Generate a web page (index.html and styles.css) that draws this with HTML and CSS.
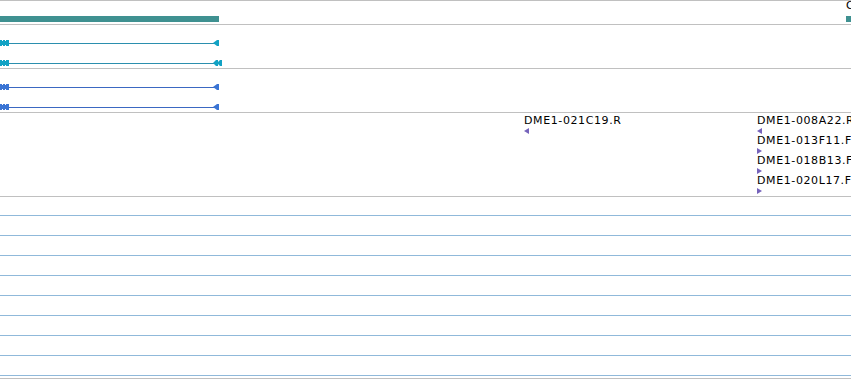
FILE: index.html
```html
<!DOCTYPE html>
<html>
<head>
<meta charset="utf-8">
<link rel="stylesheet" href="styles.css">
</head>
<body>
<div class="canvas">
  <div class="track t1">
    <div class="bar" style="left:0;width:219px"></div>
    <div class="label" style="left:846px;top:-2px">C</div>
    <div class="bar" style="left:846px;width:8px"></div>
  </div>
  <div class="track t2">
    <svg class="feat" style="top:15px" width="225" height="7" viewBox="0 0 225 7">
      <rect x="8" y="3" width="207" height="1" class="ln-c"/>
      <path class="fc" d="M0 0h9v6H0z"/>
      <path fill="#fff" d="M2 0h1v1H2zM5 0h1v1H5zM2 5h1v1H2zM5 5h1v1H5z"/>
      <polygon class="fc" points="213,3 217,0 219,0 219,6 217,6"/>
    </svg>
    <svg class="feat" style="top:35px" width="225" height="7" viewBox="0 0 225 7">
      <rect x="8" y="3" width="207" height="1" class="ln-c"/>
      <path class="fc" d="M0 0h9v6H0z"/>
      <path fill="#fff" d="M2 0h1v1H2zM5 0h1v1H5zM2 5h1v1H2zM5 5h1v1H5z"/>
      <polygon class="fc" points="213,3 216,0 218,0 218,6 216,6"/>
      <polygon class="fc" points="217,3 220,0 222,0 222,6 220,6"/>
    </svg>
  </div>
  <div class="track t3">
    <svg class="feat" style="top:15px" width="225" height="7" viewBox="0 0 225 7">
      <rect x="8" y="3" width="207" height="1" class="ln-b"/>
      <path class="fb" d="M0 0h9v6H0z"/>
      <path fill="#fff" d="M2 0h1v1H2zM5 0h1v1H5zM2 5h1v1H2zM5 5h1v1H5z"/>
      <polygon class="fb" points="213,3 217,0 219,0 219,6 217,6"/>
    </svg>
    <svg class="feat" style="top:35px" width="225" height="7" viewBox="0 0 225 7">
      <rect x="8" y="3" width="207" height="1" class="ln-b"/>
      <path class="fb" d="M0 0h9v6H0z"/>
      <path fill="#fff" d="M2 0h1v1H2zM5 0h1v1H5zM2 5h1v1H2zM5 5h1v1H5z"/>
      <polygon class="fb" points="213,3 217,0 219,0 219,6 217,6"/>
    </svg>
  </div>
  <div class="track t4">
    <div class="clone" style="left:524px;top:1px">
      <span class="label-f">DME1-021C19.R</span>
      <svg class="arr" width="5" height="6" viewBox="0 0 5 6"><polygon points="0,3 5,0 5,6"/></svg>
    </div>
    <div class="clone" style="left:757px;top:1px">
      <span class="label-f">DME1-008A22.R</span>
      <svg class="arr" width="5" height="6" viewBox="0 0 5 6"><polygon points="0,3 5,0 5,6"/></svg>
    </div>
    <div class="clone" style="left:757px;top:21px">
      <span class="label-f">DME1-013F11.F</span>
      <svg class="arr" width="5" height="6" viewBox="0 0 5 6"><polygon points="5,3 0,0 0,6"/></svg>
    </div>
    <div class="clone" style="left:757px;top:41px">
      <span class="label-f">DME1-018B13.F</span>
      <svg class="arr" width="5" height="6" viewBox="0 0 5 6"><polygon points="5,3 0,0 0,6"/></svg>
    </div>
    <div class="clone" style="left:757px;top:61px">
      <span class="label-f">DME1-020L17.F</span>
      <svg class="arr" width="5" height="6" viewBox="0 0 5 6"><polygon points="5,3 0,0 0,6"/></svg>
    </div>
  </div>
  <div class="track t5">
    <div class="grid-row"></div>
    <div class="grid-row"></div>
    <div class="grid-row"></div>
    <div class="grid-row"></div>
    <div class="grid-row"></div>
    <div class="grid-row"></div>
    <div class="grid-row"></div>
    <div class="grid-row"></div>
    <div class="grid-row"></div>
  </div>
</div>
</body>
</html>
```

FILE: styles.css
```css
html, body {
  margin: 0;
  padding: 0;
  background: #fff;
}
.canvas {
  width: 851px;
  height: 380px;
  overflow: hidden;
  font-family: "DejaVu Sans", sans-serif;
  font-size: 11px;
  color: #000;
  border-top: 1px solid #c0c0c0;
  box-sizing: border-box;
}
.track {
  position: relative;
  border-bottom: 1px solid #c0c0c0;
  overflow: visible;
}
.t1 { height: 23px; }
.t2 { height: 43px; }
.t3 { height: 43px; }
.t4 { height: 83px; }
.t5 {
  height: 182px;
  padding-top: 18px;
  box-sizing: border-box;
  overflow: hidden;
}
.bar {
  position: absolute;
  top: 15px;
  height: 6px;
  background: #3f9191;
}
.label {
  position: absolute;
  white-space: nowrap;
  line-height: 14px;
}
.feat {
  position: absolute;
  left: 0;
  display: block;
}
.fc { fill: #12a2c4; }
.ln-c { fill: #2b8fae; }
.fb { fill: #3a74d4; }
.ln-b { fill: #3b68c2; }
.clone {
  position: absolute;
  display: flex;
  flex-direction: column;
  align-items: flex-start;
  white-space: nowrap;
}
.label-f {
  line-height: 14px;
  display: block;
  letter-spacing: 0.6px;
}
.arr {
  display: block;
}
.arr polygon { fill: #7663bb; }
.grid-row {
  height: 19px;
  border-top: 1px solid #90b9da;
}
```
